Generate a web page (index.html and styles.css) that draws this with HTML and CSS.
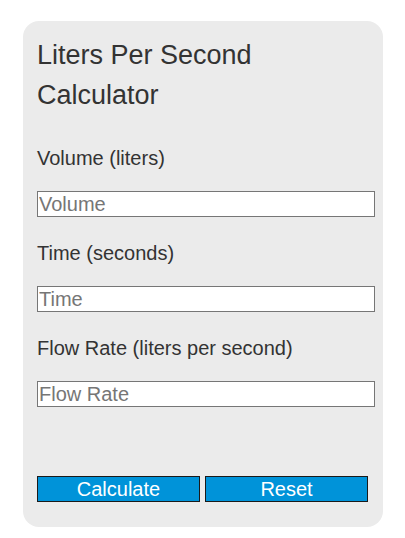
FILE: index.html
```html
<!DOCTYPE html>
<html>
<head>
<meta charset="utf-8">
<link rel="stylesheet" href="styles.css">
</head>
<body>
<div class="card">
  <h1 class="title">Liters Per Second Calculator</h1>
  <div class="field first">
    <label class="label">Volume (liters)</label>
    <input class="input" type="text" placeholder="Volume">
  </div>
  <div class="field">
    <label class="label">Time (seconds)</label>
    <input class="input" type="text" placeholder="Time">
  </div>
  <div class="field">
    <label class="label">Flow Rate (liters per second)</label>
    <input class="input" type="text" placeholder="Flow Rate">
  </div>
  <div class="buttons">
    <button class="btn">Calculate</button>
    <button class="btn">Reset</button>
  </div>
</div>
</body>
</html>
```
FILE: styles.css
```css
html, body {
  margin: 0;
  padding: 0;
  background: #ffffff;
}
body {
  padding: 21px 0 0 23px;
  font-family: "Liberation Sans", Arial, sans-serif;
  color: #333333;
}
.card {
  box-sizing: border-box;
  width: 360px;
  height: 506px;
  background: #ebebeb;
  border-radius: 16px;
  padding: 14px 14px 0 14px;
}
.title {
  margin: 0;
  font-size: 27px;
  font-weight: normal;
  line-height: 40px;
  color: #333333;
}
.label {
  display: block;
  font-size: 20px;
  line-height: 23px;
  margin-top: 25px;
  color: #333333;
}
.field.first .label {
  margin-top: 32px;
}
.input {
  display: block;
  box-sizing: border-box;
  width: 338px;
  height: 26px;
  margin: 21px 0 0 0;
  padding: 0 1px;
  border: 1px solid #767676;
  background: #ffffff;
  font-family: "Liberation Sans", Arial, sans-serif;
  font-size: 20px;
  color: #333;
}
.input::placeholder {
  color: #767676;
}
.buttons {
  display: flex;
  gap: 5px;
  margin-top: 69px;
}
.btn {
  box-sizing: border-box;
  width: 163px;
  height: 26px;
  padding: 0;
  background: #0093d9;
  border: 1px solid #1a1a1a;
  color: #ffffff;
  font-family: "Liberation Sans", Arial, sans-serif;
  font-size: 20px;
  line-height: 22px;
}
```
